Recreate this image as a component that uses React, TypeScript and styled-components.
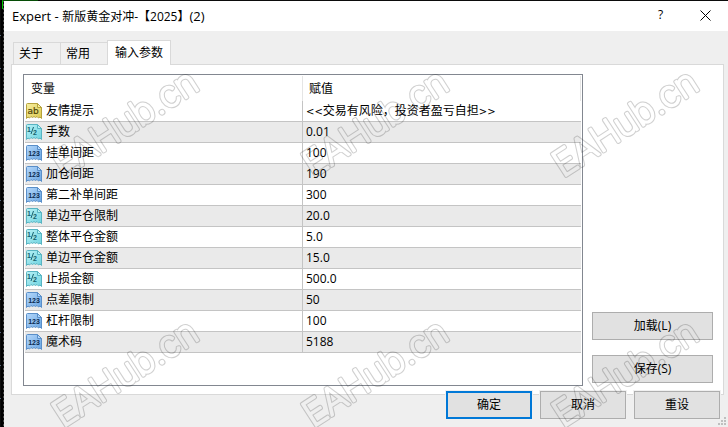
import React, { useState } from "react";
import styled, { createGlobalStyle, css } from "styled-components";

const Global = createGlobalStyle`
  * { box-sizing: border-box; }
  html, body { margin: 0; background: #efefef; }
  body, button {
    font-family: "Open Sans", "Noto Sans CJK SC", sans-serif;
    font-size: 12px;
    line-height: 16px;
    color: #000;
  }
`;

const Desktop = styled.div`
  position: relative;
  min-height: 100vh;
  padding: 1px 0 0 4px;
  background: #0b0b0b;
  display: flex;
  overflow: hidden;
`;

const ChartGrid = styled.div`
  position: absolute;
  inset: 0 auto 0 0;
  width: 4px;
  background:
    repeating-linear-gradient(#4a4a4a 0 2px, #0b0b0b 2px 4px) 3px 0 / 1px 100% no-repeat,
    repeating-linear-gradient(#0b0b0b 0 32px, #56657a 32px 33px) 0 3px / 1px 100% no-repeat,
    #000;
`;

const Candle = styled.div`
  position: absolute;
  top: 0;
  left: 2px;
  width: 36px;
  height: 9px;
  border: solid #00c800;
  border-width: 1px 0 0 1px;
  border-top-color: #064d06;
`;

const Dialog = styled.main`
  position: relative;
  flex: 1;
  min-width: 0;
  background: #efefef;
`;

const TitleBar = styled.header`
  height: 30px;
  display: flex;
  align-items: center;
  padding-left: 8px;
  background: #fff;
`;

const Title = styled.h1`
  flex: 1;
  margin: 0;
  font-size: 12px;
  font-weight: 400;
  line-height: 16px;
`;

const Latin = styled.span`
  font-size: 13px;
`;

const CaptionButton = styled.button`
  width: 45px;
  height: 28px;
  padding: 0;
  border: 0;
  background: none;
  display: grid;
  place-items: center;
  align-self: flex-start;
`;

const Content = styled.div`
  padding: 9px 4px 0 7px;
`;

const Tabs = styled.div`
  display: flex;
  align-items: flex-end;
  height: 24px;
  padding-left: 2px;
`;

const Tab = styled.button<{ $active: boolean }>`
  height: 22px;
  padding: 0 17px 0 5px;
  border: 1px solid #d9d9d9;
  border-bottom: 0;
  margin-right: -1px;
  background: #f0f0f0;
  white-space: nowrap;
  ${(p) =>
    p.$active &&
    css`
      position: relative;
      height: 25px;
      margin-bottom: -1px;
      padding: 0 7px;
      background: #fff;
    `}
`;

const Panel = styled.section`
  display: flex;
  align-items: flex-end;
  gap: 9px;
  padding: 9px 10px 8px 11px;
  border: 1px solid #d9d9d9;
  background: #fff;
`;

const ListFrame = styled.div`
  flex: 1;
  min-width: 0;
  min-height: 312px;
  padding: 1px;
  border: 1px solid #828790;
  background: #fff;
`;

const ParamTable = styled.table`
  width: 100%;
  table-layout: fixed;
  border-collapse: separate;
  border-spacing: 0;
`;

const HeadCell = styled.th`
  height: 25px;
  padding: 0 6px;
  border-right: 1px solid #e5e5e5;
  font-weight: 400;
  text-align: left;
`;

const NameColumn = styled.col`
  width: 50%;
`;

const Row = styled.tr`
  &:nth-child(even) {
    background: #eaeaea;
  }
`;

const Cell = styled.td`
  height: 21px;
  padding: 0 3px;
  border-bottom: 1px solid #c4c4c4;
  white-space: nowrap;
`;

const NameCell = styled(Cell)`
  padding: 0 1px;
  border-right: 1px solid #c4c4c4;
`;

const NameContent = styled.div`
  display: flex;
  align-items: center;
  gap: 4px;
  height: 20px;
`;

const Chevrons = styled.span`
  font-family: "DejaVu Sans", sans-serif;
  font-size: 10px;
`;

const SideButtons = styled.div`
  display: grid;
  gap: 15px;
  width: 121px;
  padding-bottom: 3px;
`;

const PushButton = styled.button<{ $primary?: boolean }>`
  height: 28px;
  padding: 0;
  background: #e1e1e1;
  border: ${(p) => (p.$primary ? "2px solid #0078d7" : "1px solid #adadad")};
`;

const Footer = styled.footer`
  position: relative;
  display: flex;
  justify-content: flex-end;
  gap: 8px;
  margin-top: -4px;
  padding: 0 8px 8px;

  ${PushButton} {
    width: 86px;
    box-shadow: 0 0 0 1px #f0f0f0;
  }
`;

const Grip = styled.svg`
  position: absolute;
  right: 0;
  bottom: 0;
`;

const WatermarkLayer = styled.svg`
  position: absolute;
  inset: 0;
  width: 100%;
  height: 100%;
  pointer-events: none;
`;

type Kind = "string" | "double" | "int";

const palette: Record<Kind, { light: string; dark: string; edge: string; ink: string }> = {
  string: { light: "#f7efa0", dark: "#dcc850", edge: "#b5a23c", ink: "#4f4508" },
  double: { light: "#b8f1f5", dark: "#6fd3e0", edge: "#58b4c2", ink: "#14606e" },
  int: { light: "#b5d8fb", dark: "#6aa5e2", edge: "#5a8fc9", ink: "#0c2b50" },
};

function TypeIcon({ kind }: { kind: Kind }) {
  const c = palette[kind];
  const id = `paper-${kind}`;
  return (
    <svg width="16" height="16" viewBox="0 0 16 16" aria-hidden="true">
      <defs>
        <linearGradient id={id} x1="0" y1="0" x2="1" y2="1">
          <stop offset="0" stopColor={c.light} />
          <stop offset="1" stopColor={c.dark} />
        </linearGradient>
      </defs>
      <path
        d="M.5 1.5q0-1 1-1H11.5L15.5 4.5V15.5L14 14L12.5 15L11 13.5L9.5 14.5L8 13.5L6.5 14.5L5 13.5L3.5 15L2 14L.5 15.5Z"
        fill={`url(#${id})`}
        stroke={c.edge}
      />
      <path d="M11.5.5V4.5H15.5Z" fill={c.light} stroke={c.edge} />
      {kind === "string" && (
        <text x="7" y="11" textAnchor="middle" fontFamily="DejaVu Sans" fontSize="9" fill={c.ink} stroke={c.ink} strokeWidth=".2">ab</text>
      )}
      {kind === "int" && (
        <text x="8" y="11" textAnchor="middle" fontFamily="Liberation Sans" fontWeight="700" fontSize="7" fill={c.ink}>123</text>
      )}
      {kind === "double" && (
        <g fontFamily="Liberation Sans" fontWeight="700" fontSize="7" fill={c.ink}>
          <text x="1" y="8">1</text>
          <text x="7" y="11">2</text>
          <path d="M7.5 3L5 10" stroke={c.ink} fill="none" />
        </g>
      )}
    </svg>
  );
}

function Watermark() {
  const mark = { x: 0, y: 0, fontFamily: "Inter", fontWeight: 200, fontSize: 36, strokeLinejoin: "round" as const };
  return (
    <WatermarkLayer aria-hidden="true">
      <defs>
        <mask id="outline" maskUnits="userSpaceOnUse" x="-10" y="-50" width="200" height="70">
          <text {...mark} fill="#fff" stroke="#fff" strokeWidth="4">EAHub.cn</text>
          <text {...mark} fill="#000" stroke="#000" strokeWidth="2">EAHub.cn</text>
        </mask>
        <pattern id="tile" width="250" height="250" patternUnits="userSpaceOnUse">
          <g transform="translate(63 178) rotate(-33)">
            <rect x="-10" y="-50" width="200" height="70" fill="#000" fillOpacity=".19" mask="url(#outline)" />
          </g>
        </pattern>
      </defs>
      <rect width="100%" height="100%" fill="url(#tile)" />
    </WatermarkLayer>
  );
}

const params: { name: string; value: React.ReactNode; kind: Kind }[] = [
  {
    name: "友情提示",
    value: (
      <>
        <Chevrons>&lt;&lt;</Chevrons>交易有风险，投资者盈亏自担<Chevrons>&gt;&gt;</Chevrons>
      </>
    ),
    kind: "string",
  },
  { name: "手数", value: "0.01", kind: "double" },
  { name: "挂单间距", value: "100", kind: "int" },
  { name: "加仓间距", value: "190", kind: "int" },
  { name: "第二补单间距", value: "300", kind: "int" },
  { name: "单边平仓限制", value: "20.0", kind: "double" },
  { name: "整体平仓金额", value: "5.0", kind: "double" },
  { name: "单边平仓金额", value: "15.0", kind: "double" },
  { name: "止损金额", value: "500.0", kind: "double" },
  { name: "点差限制", value: "50", kind: "int" },
  { name: "杠杆限制", value: "100", kind: "int" },
  { name: "魔术码", value: "5188", kind: "int" },
];

const tabs = ["关于", "常用", "输入参数"];

export default function App() {
  const [active, setActive] = useState(2);
  return (
    <Desktop>
      <Global />
      <ChartGrid />
      <Candle />
      <Dialog>
        <TitleBar>
          <Title>
            <Latin>Expert - </Latin>新版黄金对冲-【2025】<Latin>(2)</Latin>
          </Title>
          <CaptionButton aria-label="帮助">?</CaptionButton>
          <CaptionButton aria-label="关闭">
            <svg width="11" height="11" viewBox="0 0 11 11" aria-hidden="true">
              <path d="M.5.5L10.5 10.5M10.5.5L.5 10.5" stroke="#000" fill="none" />
            </svg>
          </CaptionButton>
        </TitleBar>
        <Content>
          <Tabs role="tablist">
            {tabs.map((t, i) => (
              <Tab key={t} role="tab" aria-selected={i === active} $active={i === active} onClick={() => setActive(i)}>
                {t}
              </Tab>
            ))}
          </Tabs>
          <Panel>
            <ListFrame>
              <ParamTable>
                <colgroup>
                  <NameColumn />
                  <col />
                </colgroup>
                <thead>
                  <tr>
                    <HeadCell scope="col">变量</HeadCell>
                    <HeadCell scope="col">赋值</HeadCell>
                  </tr>
                </thead>
                <tbody>
                  {params.map((p) => (
                    <Row key={p.name}>
                      <NameCell>
                        <NameContent>
                          <TypeIcon kind={p.kind} />
                          {p.name}
                        </NameContent>
                      </NameCell>
                      <Cell>{p.value}</Cell>
                    </Row>
                  ))}
                </tbody>
              </ParamTable>
            </ListFrame>
            <SideButtons>
              <PushButton>加载(L)</PushButton>
              <PushButton>保存(S)</PushButton>
            </SideButtons>
          </Panel>
        </Content>
        <Footer>
          <PushButton $primary>确定</PushButton>
          <PushButton>取消</PushButton>
          <PushButton>重设</PushButton>
        </Footer>
        <Grip width="10" height="10" viewBox="0 0 10 10" fill="#bfbfbf" aria-hidden="true">
          <path d="M6 0h2v2H6zM3 3h2v2H3zM6 3h2v2H6zM0 6h2v2H0zM3 6h2v2H3zM6 6h2v2H6z" />
        </Grip>
      </Dialog>
      <Watermark />
    </Desktop>
  );
}
